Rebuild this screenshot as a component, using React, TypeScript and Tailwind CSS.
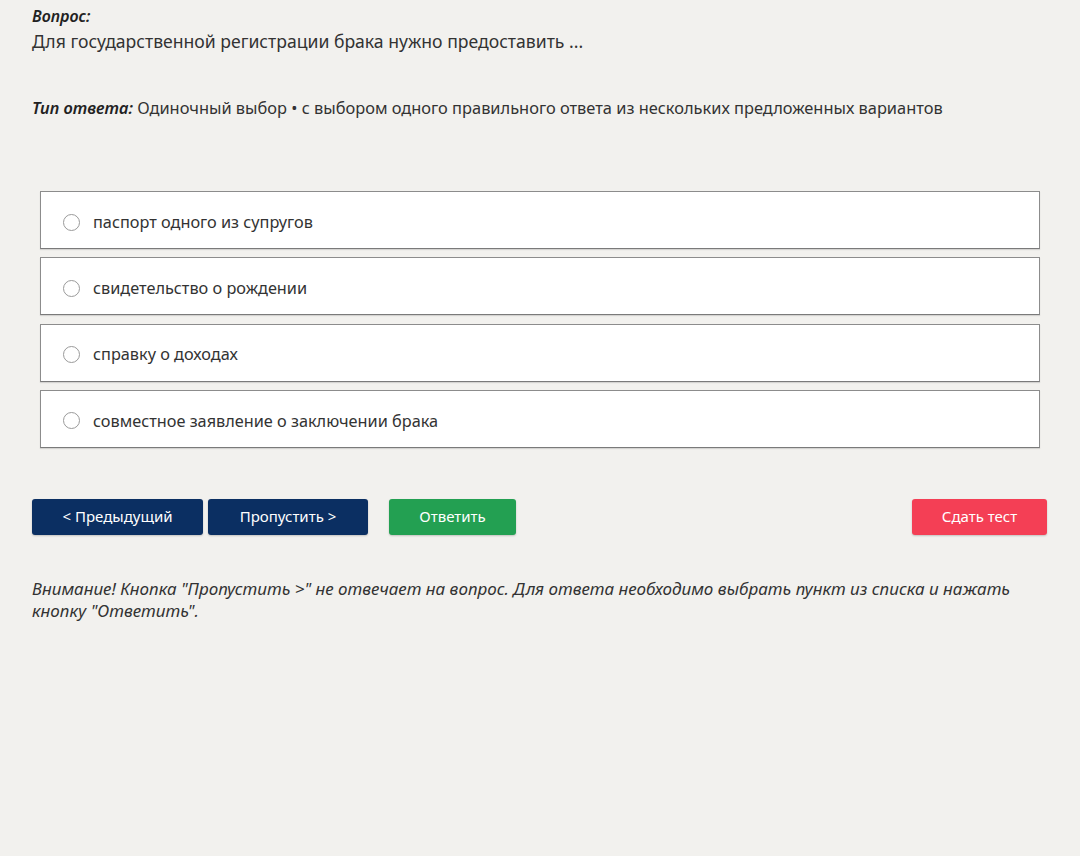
const options = [
  'паспорт одного из супругов',
  'свидетельство о рождении',
  'справку о доходах',
  'совместное заявление о заключении брака',
]

function OptionRow({ label }: { label: string }) {
  return (
    <label className="flex h-[58px] cursor-pointer items-center border border-[#8c8c8c] border-b-[#7a7a7a] bg-white pl-[22px] pt-[4px] shadow-[0_1px_1px_rgba(0,0,0,0.12)]">
      <span className="h-[17px] w-[17px] shrink-0 rounded-full border border-[#9a9a9a] bg-white" />
      <span className="ml-[13px] text-[16.3px] text-[#333]">{label}</span>
    </label>
  )
}

export default function App() {
  return (
    <div className="min-h-[856px] bg-[#f2f1ee] px-8 font-['Noto_Sans',sans-serif] text-[#333]">
      <div className="pt-[4px] text-[16px] font-semibold italic leading-[24px] text-[#222]">
        Вопрос:
      </div>
      <div className="-mt-[1px] text-[17.6px] leading-[28px] text-[#333]">
        Для государственной регистрации брака нужно предоставить ...
      </div>
      <div className="mt-[39px] text-[16.4px] leading-[28px]">
        <span className="font-semibold italic text-[#222]">Тип ответа:</span>{' '}
        Одиночный выбор • с выбором одного правильного ответа из нескольких предложенных вариантов
      </div>

      <div className="mt-[69px] flex w-[1008px] flex-col gap-[8.3px] pl-2">
        {options.map((option) => (
          <OptionRow key={option} label={option} />
        ))}
      </div>

      <div className="mt-[51px] flex w-[1015px] items-center">
        <button
          className="h-9 w-[171px] rounded-[3px] bg-[#0b2f62] pb-[2px] text-[15px] text-white shadow-[0_1px_2px_rgba(0,0,0,0.2)]"
          type="button"
        >
          &lt; Предыдущий
        </button>
        <button
          className="ml-[5px] h-9 w-[160px] rounded-[3px] bg-[#0b2f62] pb-[2px] text-[15px] text-white shadow-[0_1px_2px_rgba(0,0,0,0.2)]"
          type="button"
        >
          Пропустить &gt;
        </button>
        <button
          className="ml-[21px] h-9 w-[127px] rounded-[3px] bg-[#23a052] pb-[2px] text-[15px] text-white shadow-[0_1px_2px_rgba(0,0,0,0.2)]"
          type="button"
        >
          Ответить
        </button>
        <button
          className="ml-auto h-9 w-[135px] rounded-[3px] bg-[#f43f55] pb-[2px] text-[15px] text-white shadow-[0_1px_2px_rgba(0,0,0,0.2)]"
          type="button"
        >
          Сдать тест
        </button>
      </div>

      <p className="mt-[43px] w-[1000px] text-[17px] italic leading-[22px] text-[#333]">
        Внимание! Кнопка "Пропустить &gt;" не отвечает на вопрос. Для ответа необходимо выбрать
        пункт из списка и нажать кнопку "Ответить".
      </p>
    </div>
  )
}
